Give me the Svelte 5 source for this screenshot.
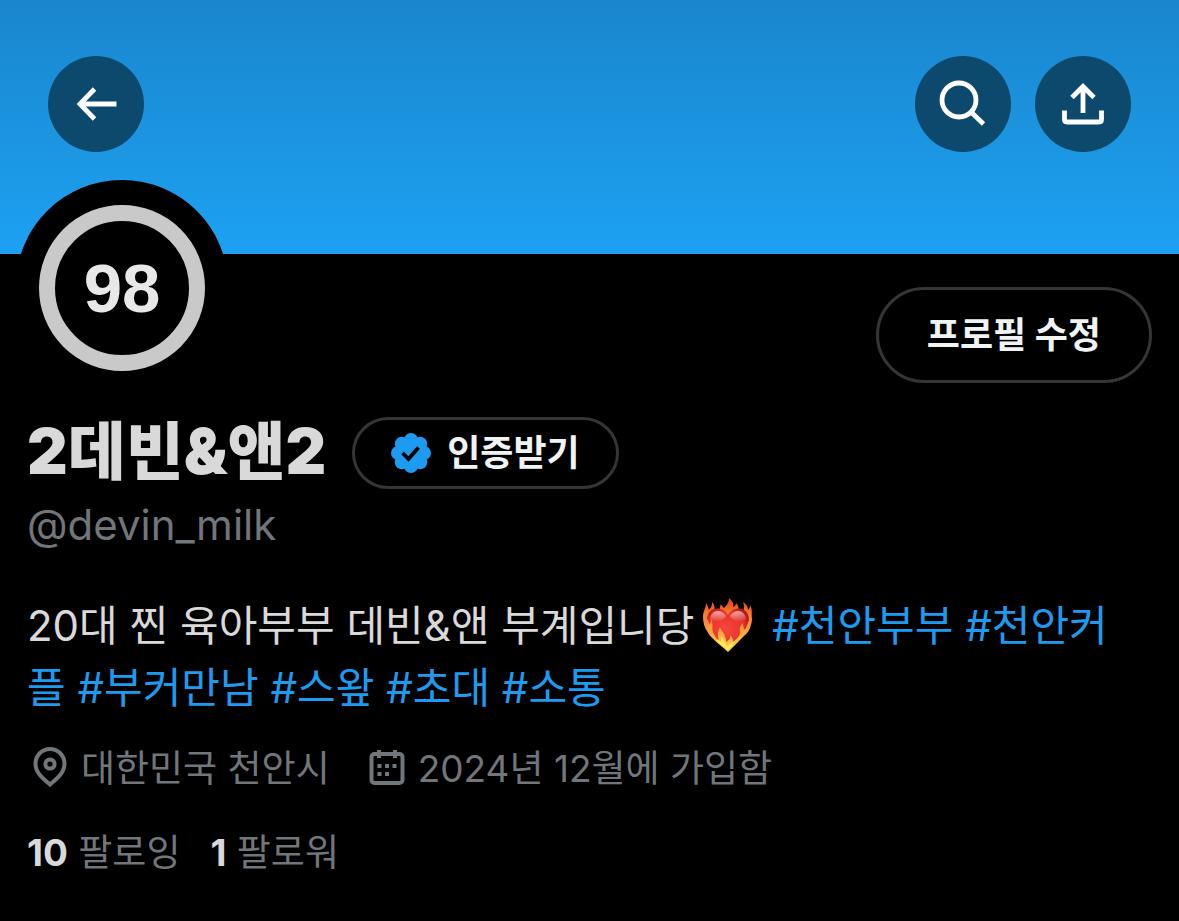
<script lang="ts">
    const tagsInBio = ['천안부부', '천안커플', '부커만남', '스왚', '초대', '소통'];

    const profile = {
        name: '2데빈&앤2',
        handle: '@devin_milk',
        bio: '20대 찐 육아부부 데빈&앤 부계입니당',
        location: '대한민국 천안시',
        joined: '2024년 12월에 가입함',
        following: 10,
        followers: 1
    };
</script>

<div class="profile">
    <header class="banner">
        <button class="round" aria-label="뒤로">
            <svg width="48" height="48" viewBox="0 0 48 48" fill="none" stroke="#fff" stroke-width="4.8">
                <path d="M44.5 24H8M22.500 9L8 24L22.500 39" />
            </svg>
        </button>
        <div class="actions">
            <button class="round" aria-label="검색">
                <svg width="48" height="48" viewBox="0 0 48 48" fill="none" stroke="#fff" stroke-width="4.8">
                    <circle cx="20" cy="20" r="17" />
                    <path d="M32 32L44.500 44" />
                </svg>
            </button>
            <button class="round" aria-label="공유">
                <svg width="48" height="48" viewBox="0 0 48 48" fill="none" stroke="#fff" stroke-width="4.8">
                    <path d="M24 33V6M13 17.500L24 6.500L35 17.500" />
                    <path d="M5.500 30.500V39.500Q5.500 42 8 42H40Q42.500 42 42.500 39.500V30.500" />
                </svg>
            </button>
        </div>
    </header>

    <div class="top">
        <div class="avatar"><div class="ring">98</div></div>
        <button class="pill edit">프로필 수정</button>
    </div>

    <main>
        <div class="name-row">
            <h1>{profile.name}</h1>
            <button class="pill verify">
                <svg width="40" height="40" viewBox="0 0 40 40" fill="#1d9bf0">
                    <circle cx="20" cy="20" r="16" />
                    <circle cx="20" cy="7" r="7" />
                    <circle cx="29.200" cy="10.800" r="7" />
                    <circle cx="33" cy="20" r="7" />
                    <circle cx="29.200" cy="29.200" r="7" />
                    <circle cx="20" cy="33" r="7" />
                    <circle cx="10.800" cy="29.200" r="7" />
                    <circle cx="7" cy="20" r="7" />
                    <circle cx="10.800" cy="10.800" r="7" />
                    <path d="M11.500 20L17.500 26L27.500 14.500" fill="none" stroke="#000" stroke-width="3.800" />
                </svg>
                인증받기
            </button>
        </div>
        <p class="handle">{profile.handle}</p>

        <p class="bio">
            {profile.bio}<svg class="emoji" viewBox="0 0 52 56" role="img" aria-label="불타는 하트">
                <defs>
                    <linearGradient id="flame" x1="0" y1="0" x2="0" y2="1">
                        <stop offset="0" stop-color="#d93a1a" />
                        <stop offset=".4" stop-color="#f9742c" />
                        <stop offset="1" stop-color="#ffc04a" />
                    </linearGradient>
                    <linearGradient id="lick" x1="0" y1="0" x2="0" y2="1">
                        <stop offset="0" stop-color="#f77a35" />
                        <stop offset="1" stop-color="#ffd84a" />
                    </linearGradient>
                    <radialGradient id="heart" cx=".45" cy=".5" r=".6">
                        <stop offset="0" stop-color="#f4483d" />
                        <stop offset=".7" stop-color="#ea3329" />
                        <stop offset="1" stop-color="#b5191a" />
                    </radialGradient>
                    <linearGradient id="shine" x1="0" y1="0" x2="0" y2="1">
                        <stop offset="0" stop-color="#fff" stop-opacity=".6" />
                        <stop offset="1" stop-color="#fff" stop-opacity="0" />
                    </linearGradient>
                </defs>
                <path fill="url(#flame)" d="M8 36C3 31 1 26 1 20C1 14 4 11 4 6C6 9 6 11 7 13C9 11 10 9 10 5C13 8 13 11 12 14L18 15C17 12 18 9 19 7C20 9 21 10 22 11C25 8 27 5 27 1C31 4 32 7 31 10C33 9 34 8 34 6C37 9 37 12 36 15L41 14C43 11 42 8 41 5C45 8 46 10 46 13C47 12 48 11 48 8C51 13 49 17 50 22C50 27 48 31 44 36Z" />
                <path fill="url(#heart)" d="M26 53C18 45 6 36 5 24C4 11 19 7 26 18C33 7 48 11 47 24C46 36 34 45 26 53Z" />
                <path fill="url(#shine)" d="M8 22C9 13 19 11 24 19C20 25 12 27 8 22ZM28 19C33 11 43 13 44 22C40 27 32 25 28 19Z" />
                <path fill="url(#lick)" d="M26 55C19 48 9 42 5 34C2 29 1 25 3 18C4 21 7 23 7 27C9 26 9 24 9 22C12 27 9 32 12 37C13 40 15 42 17 43C15 38 16 34 18 30C19 34 23 36 23 40C24 41 24 43 24 45C27 43 29 41 28 38C31 41 31 43 31 45C35 42 39 38 38 33C37 31 39 28 41 26C41 29 42 31 42 33C46 30 45 25 48 22C50 30 47 35 42 39C37 44 32 49 26 55Z" />
                <path fill="#ffe95c" d="M26 53C21 50 17 46 14 43C17 43 18 44 19 45C20 43 19 41 19 39C22 42 23 46 25 49C28 47 30 45 33 44C32 47 29 50 26 53Z" />
            </svg>
            {#each tagsInBio as tag}
                <a href="#{tag}">#{tag}</a>{' '}
            {/each}
        </p>

        <div class="meta">
            <span>
                <svg width="46" height="46" viewBox="0 0 46 46" fill="none" stroke="currentColor" stroke-width="4">
                    <path d="M23 38.500C16 32.500 8.500 27 8.500 17.500A14.500 14.500 0 0 1 37.500 17.500C37.500 27 30 32.500 23 38.500Z" />
                    <circle cx="23" cy="18" r="4.600" />
                </svg>
                {profile.location}
            </span>
            <span>
                <svg width="46" height="46" viewBox="0 0 46 46" fill="none" stroke="currentColor" stroke-width="4">
                    <rect x="7.500" y="8" width="31" height="29" rx="3" />
                    <path d="M15 4V12M31 4V12M13.500 20H17.500M21 20H25M28.500 20H32.500M13.500 28H17.500M21 28H25" />
                </svg>
                {profile.joined}
            </span>
        </div>

        <div class="counts">
            <a href="#following"><b>{profile.following}</b> 팔로잉</a>
            <a href="#followers"><b>{profile.followers}</b> 팔로워</a>
        </div>
    </main>
</div>

<style>
    :global(body) {
        margin: 0;
        background: #000;
    }

    .profile {
        background: #000;
        color: #d9d9d9;
        font-family: Inter, "Noto Sans CJK KR", sans-serif;
        font-size: 42px;
        padding-bottom: 42px;
    }

    .banner {
        display: flex;
        justify-content: space-between;
        box-sizing: border-box;
        height: 254px;
        padding: 56px 48px;
        background: linear-gradient(#1a86cd, #1da1f2);
    }

    .actions {
        display: flex;
        gap: 24px;
    }

    button {
        font-family: inherit;
        color: #eff3f4;
        cursor: pointer;
    }

    .round {
        display: flex;
        align-items: center;
        justify-content: center;
        width: 96px;
        height: 96px;
        padding: 0;
        border: none;
        border-radius: 50%;
        background: #0d496d;
    }

    .top {
        display: flex;
        justify-content: space-between;
        align-items: flex-start;
        padding: 0 27px 0 16px;
    }

    .avatar {
        display: flex;
        align-items: center;
        justify-content: center;
        box-sizing: border-box;
        width: 212px;
        height: 212px;
        margin-top: -74px;
        padding-top: 4px;
        border-radius: 50%;
        background: #000;
    }

    .ring {
        display: flex;
        align-items: center;
        justify-content: center;
        width: 134px;
        height: 134px;
        border: 16px solid #c9c9c9;
        border-radius: 50%;
        font-family: "Liberation Sans", sans-serif;
        font-size: 69px;
        font-weight: 700;
        line-height: 1;
        color: #e8e8e8;
    }

    .pill {
        display: flex;
        align-items: center;
        justify-content: center;
        box-sizing: border-box;
        border: 3px solid #333639;
        border-radius: 48px;
        background: #000;
        font-size: 36px;
        font-weight: 700;
        line-height: 48px;
    }

    .edit {
        height: 96px;
        margin-top: 33px;
        padding: 0 48px;
    }

    .verify {
        height: 72px;
        gap: 16px;
        padding: 0 36px;
    }

    main {
        padding: 25px 48px 0 27px;
    }

    .name-row {
        display: flex;
        align-items: center;
        gap: 26px;
    }

    h1 {
        margin: 0;
        padding-bottom: 4px;
        font-size: 63px;
        font-weight: 900;
        line-height: 68px;
    }

    p {
        margin: 0;
    }

    .handle {
        margin-top: 8px;
        line-height: 56px;
        color: #71767b;
    }

    .bio {
        margin-top: 42px;
        line-height: 62px;
    }

    .emoji {
        width: 52px;
        height: 56px;
        margin: 0 6px 0 8px;
        vertical-align: -12px;
    }

    a {
        color: #1d9bf0;
        text-decoration: none;
    }

    .meta {
        display: flex;
        flex-wrap: wrap;
        gap: 34px;
        margin-top: 26px;
        font-size: 37px;
        line-height: 48px;
        color: #71767b;
    }

    .meta span {
        display: flex;
        align-items: center;
        gap: 8px;
    }

    .counts {
        display: flex;
        gap: 30px;
        margin-top: 36px;
        font-size: 37px;
        line-height: 48px;
    }

    .counts a {
        color: #71767b;
    }

    b {
        font-weight: 700;
        color: #d9d9d9;
    }
</style>
